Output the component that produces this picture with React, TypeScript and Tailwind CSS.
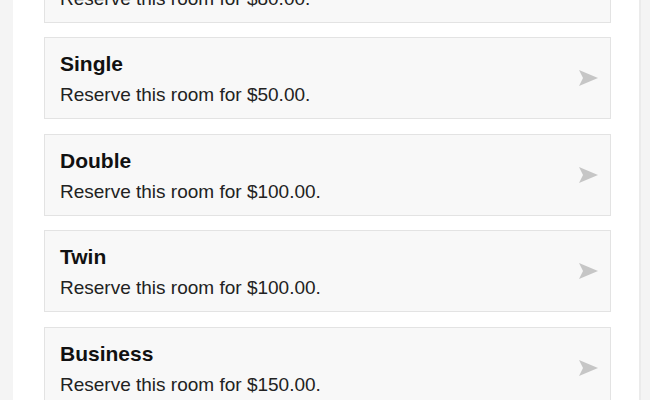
import React from "react";

const rooms = [
  { name: "Standard", price: "$80.00" },
  { name: "Single", price: "$50.00" },
  { name: "Double", price: "$100.00" },
  { name: "Twin", price: "$100.00" },
  { name: "Business", price: "$150.00" },
];

function Arrow() {
  return (
    <svg width="19" height="16" viewBox="0 0 19 16" className="shrink-0">
      <polygon points="0,0 19,8 0,16 4,8" fill="#c6c6c6" />
    </svg>
  );
}

export default function App() {
  return (
    <div
      className="w-[650px] h-[400px] overflow-hidden bg-[#f4f4f4] flex"
      style={{ fontFamily: '"Liberation Sans", Arial, sans-serif' }}
    >
      <div className="ml-[13px] w-[628px] h-full bg-white border-r-2 border-[#ebebeb] overflow-hidden">
        <div className="mt-[-59.5px] ml-[31px] w-[567px] flex flex-col gap-[14.5px]">
          {rooms.map((r) => (
            <div
              key={r.name}
              className="h-[82px] border border-[#e3e3e3] bg-[#f8f8f8] flex items-center pl-[15px] pr-[12px]"
            >
              <div className="flex-1 flex flex-col self-stretch pt-[14px]">
                <div className="text-[21px] leading-[24px] font-bold text-[#111]">{r.name}</div>
                <div className="mt-[8px] text-[19px] leading-[22px] text-[#222]">
                  Reserve this room for {r.price}.
                </div>
              </div>
              <Arrow />
            </div>
          ))}
        </div>
      </div>
    </div>
  );
}
